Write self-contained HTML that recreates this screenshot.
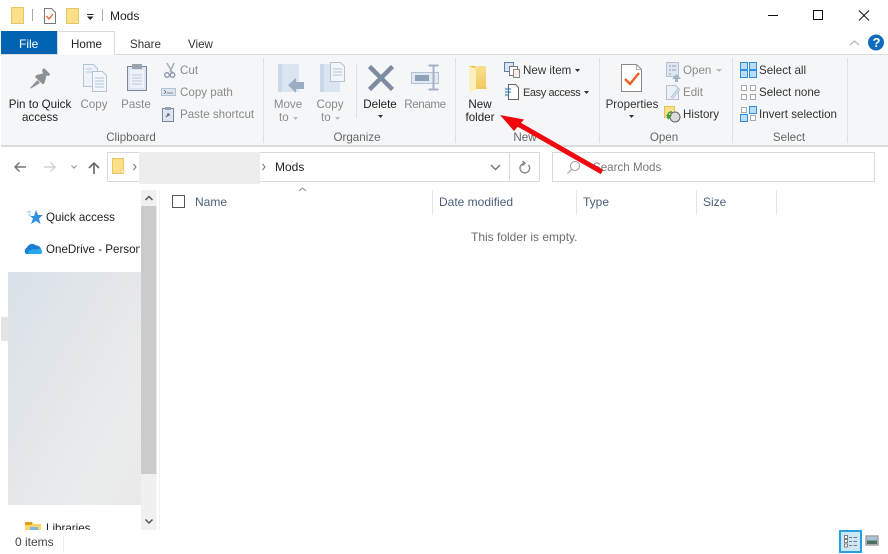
<!DOCTYPE html>
<html><head><meta charset="utf-8"><style>
html,body{margin:0;padding:0;background:#fff}
#r{position:relative;width:888px;height:554px;overflow:hidden;background:#fff;font-family:"Liberation Sans",sans-serif;font-size:11.6px;color:#333}
.t{position:absolute;white-space:nowrap;line-height:14px;margin-top:1px}
.c{text-align:center;transform:translateX(-50%)}
.g{color:#8a8a8a}.d{color:#222}.l{color:#666}
.h{font-size:12px;margin-top:0}
.b{position:absolute}
svg{position:absolute;left:0;top:0}
</style></head><body><div id="r">

<!-- ribbon backgrounds -->
<div class="b" style="left:1px;top:54px;width:887px;height:93px;background:#f5f6f7;border-top:1px solid #dadbdc;border-bottom:2px solid #dadbdc;box-sizing:border-box"></div>
<div class="b" style="left:1px;top:31px;width:56px;height:23px;background:#0063b1"></div>
<div class="b" style="left:57px;top:31px;width:58px;height:24px;background:#fff;border:1px solid #dadbdc;border-bottom:none;box-sizing:border-box;z-index:1"></div>

<svg width="888" height="554" viewBox="0 0 888 554" style="z-index:2">
<defs>
<linearGradient id="gr" x1="0" y1="0" x2="1" y2="1"><stop offset="0" stop-color="#d8e2e8"/><stop offset=".45" stop-color="#e4e7ea"/><stop offset=".8" stop-color="#ebecec"/><stop offset="1" stop-color="#e9e9e9"/></linearGradient>
<linearGradient id="nf" x1="0" y1="0" x2="0" y2="1"><stop offset="0" stop-color="#f8e08e"/><stop offset="1" stop-color="#f3c95a"/></linearGradient>
</defs>
<!-- title bar icons -->
<path d="M11.500 7.500h12v16h-12z" fill="#fcdf86" stroke="#e8c665"/><path d="M20 20h3v3h-3z" fill="#fff2c0" stroke="#e8c665" stroke-width=".6"/>
<path d="M32.500 9v12" stroke="#aaa"/>
<path d="M44.500 8.500h7l4 4v11h-11z" fill="#fff" stroke="#777"/><path d="M46.500 16l2.500 3 4-5" fill="none" stroke="#e8602c" stroke-width="1.300"/>
<path d="M66.500 8.500h12v15h-12z" fill="#fcdf86" stroke="#e8c665"/><path d="M75 20h3v3h-3z" fill="#fff2c0" stroke="#e8c665" stroke-width=".6"/>
<path d="M87 14.500h6.500" stroke="#222"/><path d="M87 16.500h6.500l-3.250 3.500z" fill="#222"/>
<path d="M102.500 9v12" stroke="#aaa"/>
<!-- window buttons -->
<path d="M768 15.500h10" stroke="#111"/><rect x="813.500" y="10.500" width="9" height="9" fill="none" stroke="#111"/>
<path d="M859 10.500l10 10M869 10.500l-10 10" stroke="#111" fill="none"/>
<path d="M850 45l4.500-4 4.500 4" fill="none" stroke="#bbb" stroke-width="1.300"/>
<circle cx="876" cy="42.500" r="8" fill="#0f6cbd"/>

<!-- group separators -->
<path d="M263.500 58v85M455.500 58v85M599.500 58v85M732.500 58v85M847.500 58v85M356.500 64v54" stroke="#dfe0e1"/>

<!-- pin -->
<path d="M42 70L44 68L50 74L49 76L46.500 75.500L44.500 83L43 84.500L35 77L36.500 75L43 73.500z" fill="#8b9297"/>
<path d="M37.500 80L30 88L31 88.500L40 83z" fill="#8b9297"/>
<!-- copy -->
<path d="M83.500 64.500h10l4 4v18h-14z" fill="#eef3f9" stroke="#b4c2d6"/><path d="M92.500 71.500h10l4 4v16h-14z" fill="#f2f5fa" stroke="#b4c2d6"/>
<path d="M95 78h9M95 81h9M95 84h9M95 87h9M86 69h6M86 72h6" stroke="#b6c6dc"/>
<!-- paste -->
<rect x="127.500" y="66.500" width="19" height="24" fill="#dfe6f1" stroke="#7b8798"/><rect x="130" y="70" width="14" height="18" fill="#eef2f8"/><rect x="132" y="64" width="10" height="5" fill="#9aa4b1"/>
<path d="M132 75h10M132 78h10M132 81h10M132 84h10" stroke="#bccadd"/>
<!-- cut -->
<path d="M167 63l5 9 0 2M174 63l-4 9" stroke="#a9b1ba" stroke-width="1.600" fill="none"/><circle cx="167" cy="75" r="2.300" fill="none" stroke="#8595ad" stroke-width="1.300"/><circle cx="172.500" cy="75" r="2.300" fill="none" stroke="#8595ad" stroke-width="1.300"/>
<!-- copy path -->
<rect x="161.500" y="88.500" width="14" height="7" fill="#dce4ef" stroke="#b4c2d6"/><path d="M164 90l2 2-2 2M167 93h6" stroke="#667" stroke-width=".8" fill="none"/>
<!-- paste shortcut -->
<rect x="162.500" y="108.500" width="11" height="13" fill="#dfe6f1" stroke="#7b8798"/><rect x="165" y="107" width="6" height="3" fill="#9aa4b1"/><path d="M166 117l3-3m-2 0h2v2" stroke="#556" fill="none"/>

<!-- move to -->
<path d="M278 64h21v28h-21z" fill="#dbe5f2"/><path d="M278 64h4v28h-4z" fill="#cbd8e8"/>
<path d="M288 85l8-7v4h8v7h-8v4z" fill="#9aadc4"/>
<!-- copy to -->
<path d="M320 64h20v28h-20z" fill="#dbe5f2"/><path d="M320 64h4v28h-4z" fill="#cbd8e8"/>
<path d="M330.500 62.500h10l4 4v15h-14z" fill="#f2f5fa" stroke="#b4c2d6"/><path d="M333 69h9M333 72h9M333 75h9" stroke="#b6c6dc"/>
<!-- delete -->
<path d="M369.500 66.500l23 23M392.500 66.500l-23 23" stroke="#7c8ba1" stroke-width="4.500" fill="none"/>
<!-- rename -->
<rect x="411.500" y="72.500" width="27" height="11" fill="#e3e9f2" stroke="#b4c2d6"/><rect x="415" y="75" width="14" height="6" fill="#8fa1b8"/>
<path d="M428.500 65.500h10M428.500 89.500h10" stroke="#a3b2c6" stroke-width="2"/><path d="M433.500 65.500v24" stroke="#a3b2c6" stroke-width="2"/>
<!-- new folder -->
<path d="M471 66h15v20l1 3h-13z" fill="url(#nf)"/><path d="M469 66l7 3v21l-7 3z" fill="#fdf0c0"/><path d="M469 66h6v1.500h-2z" fill="#e6b93c"/>
<!-- new item -->
<rect x="504.500" y="62.500" width="9" height="9" fill="#d6e6f7" stroke="#5b7fa5"/><rect x="509.500" y="66.500" width="8" height="9" fill="#fff" stroke="#777"/><rect x="513.500" y="69.500" width="6" height="8" fill="#fdeaea" stroke="#888"/>
<!-- easy access -->
<path d="M508.500 84.500h7l3 3v12h-10z" fill="#fff" stroke="#666"/><path d="M505 89h6M505 92h6M505 95h4" stroke="#1f6fb5"/>
<!-- properties -->
<path d="M621.500 64.500h15l5 5v22h-20z" fill="#fff" stroke="#888"/><path d="M636.500 64.500v5h5" fill="none" stroke="#aaa"/><path d="M625 79l5 5 9-11" fill="none" stroke="#ed5e21" stroke-width="2.400"/>
<!-- open -->
<rect x="666.500" y="62.500" width="12" height="14" fill="#dfe6f1" stroke="#b4c2d6"/><path d="M669 66h2M669 70h2M669 74h2M672 66h4M672 70h4" stroke="#8fa1b8"/><path d="M672 79l4.500-5 4.500 5h-3v3h-3v-3z" fill="#9fb2c8"/>
<!-- edit -->
<path d="M666.500 85.500h9l3 3v11h-12z" fill="#edf1f7" stroke="#b4c2d6"/><path d="M671 97l7-9 2 1.500-7 9z" fill="#cfdbe9" stroke="#b4c2d6" stroke-width=".7"/>
<!-- history -->
<rect x="664.500" y="106.500" width="10" height="11" fill="#fbe08a" stroke="#e2c45f"/><circle cx="675" cy="117" r="5" fill="#dcdcdc" stroke="#666"/><path d="M666 115l3 4 3-4z" fill="#3c9a3a"/><path d="M669 119a4 4 0 0 1 3-7" stroke="#3c9a3a" stroke-width="1.500" fill="none"/>
<!-- select all -->
<g fill="#bcdcf6" stroke="#2f8fdc"><rect x="740.500" y="62.500" width="7" height="7"/><rect x="749.500" y="62.500" width="7" height="7"/><rect x="740.500" y="70.500" width="7" height="7"/><rect x="749.500" y="70.500" width="7" height="7"/></g>
<!-- select none -->
<g fill="#fff" stroke="#a8a8a8"><rect x="741.500" y="85.500" width="5" height="5"/><rect x="750.500" y="85.500" width="5" height="5"/><rect x="741.500" y="94.500" width="5" height="5"/><rect x="750.500" y="94.500" width="5" height="5"/></g>
<!-- invert -->
<g><rect x="741.500" y="107.500" width="5" height="5" fill="#fff" stroke="#a8a8a8"/><rect x="749.500" y="106.500" width="7" height="7" fill="#bcdcf6" stroke="#2f8fdc"/><rect x="740.500" y="114.500" width="7" height="7" fill="#bcdcf6" stroke="#2f8fdc"/><rect x="750.500" y="115.500" width="5" height="5" fill="#fff" stroke="#a8a8a8"/></g>
<!-- dropdown carets -->
<path d="M575 69h5l-2.500 3zM584 91h5l-2.500 3zM378 115h5l-2.500 3zM629 115h5l-2.500 3z" fill="#333"/>
<path d="M293 117h5l-2.500 3zM335 117h5l-2.500 3zM716 69h6l-3 3z" fill="#bbb"/>

<!-- nav row -->
<path d="M26 167h-11M19.500 162.500l-4.500 4.500 4.500 4.500" stroke="#777" stroke-width="1.500" fill="none"/>
<path d="M44 167h11M50.500 162.500l4.500 4.500-4.500 4.500" stroke="#d4d4d4" stroke-width="1.500" fill="none"/>
<path d="M71.500 165.500l2.500 2.500 2.500-2.500" stroke="#999" stroke-width="1.200" fill="none"/>
<path d="M94 174v-11M89 168l5-5 5 5" stroke="#666" stroke-width="1.600" fill="none"/>
<rect x="107.500" y="152.500" width="432" height="29" fill="#fff" stroke="#d9d9d9"/><path d="M509.500 153v28" stroke="#d9d9d9"/>
<rect x="552.500" y="152.500" width="322" height="29" fill="#fff" stroke="#d9d9d9"/>
<path d="M112.500 158.500h11v15h-11z" fill="#fcdf86" stroke="#e8c665"/><path d="M121 170h3v3h-3z" fill="#fff2c0" stroke="#e8c665" stroke-width=".6"/>
<path d="M133.500 164l2.500 3-2.500 3M262.500 164l2.500 3-2.500 3" stroke="#777" fill="none"/>
<rect x="139" y="152" width="121" height="32" fill="#ededed"/>
<path d="M491 165l4.500 4.500 4.500-4.500" stroke="#777" stroke-width="1.500" fill="none"/>
<path d="M528.500 165a4.800 4.800 0 1 1-3.500-1.700M522.500 161l2.500 2.300-2.500 2.200" stroke="#888" stroke-width="1.400" fill="none"/>
<circle cx="575" cy="166" r="4.500" fill="none" stroke="#999"/><path d="M571.500 169.500l-4 4" stroke="#999"/>

<!-- nav pane -->
<rect x="8" y="272" width="133" height="233" fill="url(#gr)"/>
<rect x="1" y="317" width="7" height="24" fill="#e4e4e4"/>
<rect x="141" y="190" width="15.500" height="340" fill="#f0f0f0"/><rect x="141" y="206" width="15.500" height="268" fill="#cbcbcb"/>
<path d="M145.500 200l3.500-3.500 3.500 3.500M145.500 519.500l3.500 3.500 3.500-3.500" stroke="#555" stroke-width="1.500" fill="none"/>
<path d="M159.500 190v340" stroke="#f2f2f2"/>
<path d="M36 210l2 5h5l-4 3.500 1.500 5.500-4.500-3-5 3 2-5.500-3-2.500h4z" fill="#2f8fe0"/><path d="M27 212h4M28 215h3" stroke="#7cc0f2"/>
<path d="M26 254a4 4 0 0 1 1-6.500 5.500 5.500 0 0 1 9-2 4.500 4.500 0 0 1 5 4 3 3 0 0 1 0 4.500z" fill="#1a7fd4"/><path d="M28 254a3 3 0 0 1 3-4 5 5 0 0 1 5 0 3 3 0 0 1 5 4z" fill="#28a8ea"/>
<path d="M25 522h7l2 2h7v8h-16z" fill="#fcd669"/><path d="M25 522h7v3h-7z" fill="#dda21a"/><rect x="30" y="527" width="8" height="5" fill="#7ab8e8"/>

<!-- list header -->
<rect x="172.500" y="195.500" width="12" height="12" fill="#fff" stroke="#555"/>
<path d="M299 191l3.500-3 3.500 3" stroke="#888" fill="none"/>
<path d="M432.500 190v25M576.500 190v25M696.500 190v25M776.500 190v25" stroke="#e5e5e5"/>

<!-- status bar -->
<rect x="0" y="530" width="888" height="24" fill="#fff"/>
<path d="M63.500 536v17" stroke="#eee"/>
<rect x="840" y="531" width="21" height="21" fill="#cce8f8" stroke="#2a9fdf" stroke-width="2"/>
<g fill="#fff" stroke="#666" stroke-width=".8"><rect x="844.500" y="535.500" width="3" height="3"/><rect x="844.500" y="539.500" width="3" height="3"/><rect x="844.500" y="544" width="3" height="3"/></g>
<path d="M849 537.500h3M853.500 537.500h3.500M849 541.500h3M853.500 541.500h3.500M849 545.500h3M853.500 545.500h3.500" stroke="#777"/>
<rect x="866" y="536" width="12" height="9" fill="#a9c4d6" stroke="#a3a3a3" stroke-width="1.500"/><path d="M867 540.500h10v3.500h-10z" fill="#4d6e60"/>
</svg>

<!-- text -->
<div class="t h d" style="left:110px;top:9px">Mods</div>
<div class="t h" style="left:19px;top:37px;color:#fff">File</div>
<div class="t d" style="left:71px;top:37px;z-index:3">Home</div>
<div class="t" style="left:130px;top:37px">Share</div>
<div class="t" style="left:188px;top:37px">View</div>
<div class="t" style="left:872.500px;top:34.500px;color:#fff;font-weight:bold;z-index:3;font-size:13px">?</div>

<div class="t c d" style="left:40px;top:97px">Pin to Quick</div>
<div class="t c d" style="left:40px;top:110px">access</div>
<div class="t c g" style="left:94px;top:97px">Copy</div>
<div class="t c g" style="left:136px;top:97px">Paste</div>
<div class="t g" style="left:180px;top:63px">Cut</div>
<div class="t g" style="left:180px;top:85px">Copy path</div>
<div class="t g" style="left:180px;top:107px">Paste shortcut</div>
<div class="t c l" style="left:131px;top:130px">Clipboard</div>

<div class="t c g" style="left:288px;top:97px">Move</div>
<div class="t g" style="left:279px;top:110px">to</div>
<div class="t c g" style="left:330px;top:97px">Copy</div>
<div class="t g" style="left:321px;top:110px">to</div>
<div class="t c d" style="left:380px;top:97px">Delete</div>
<div class="t c g" style="left:425px;top:97px;letter-spacing:-.4px">Rename</div>
<div class="t c l" style="left:357px;top:130px">Organize</div>

<div class="t c d" style="left:480px;top:97px">New</div>
<div class="t c d" style="left:480px;top:110px">folder</div>
<div class="t" style="left:523px;top:63px">New item</div>
<div class="t" style="left:523px;top:85px;font-size:11px;letter-spacing:-.4px">Easy access</div>
<div class="t c l" style="left:525px;top:130px">New</div>

<div class="t c" style="left:632px;top:97px">Properties</div>
<div class="t g" style="left:683px;top:63px">Open</div>
<div class="t g" style="left:683px;top:85px">Edit</div>
<div class="t" style="left:683px;top:107px">History</div>
<div class="t c l" style="left:664px;top:130px">Open</div>

<div class="t" style="left:759px;top:63px">Select all</div>
<div class="t" style="left:759px;top:85px">Select none</div>
<div class="t" style="left:759px;top:107px">Invert selection</div>
<div class="t c l" style="left:789px;top:130px">Select</div>

<div class="t h d" style="left:275px;top:160px;z-index:3">Mods</div>
<div class="t" style="left:593px;top:160px;color:#777;z-index:3">Search Mods</div>

<div class="t d" style="left:46px;top:210px;z-index:3">Quick access</div>
<div class="t d" style="left:46px;top:242px;z-index:3;width:94px;overflow:hidden">OneDrive - Personal</div>
<div class="t d" style="left:46px;top:521px;z-index:1">Libraries</div>

<div class="t h" style="left:195px;top:195px;color:#4c607a;z-index:3">Name</div>
<div class="t h" style="left:439px;top:195px;color:#4c607a;z-index:3">Date modified</div>
<div class="t h" style="left:583px;top:195px;color:#4c607a;z-index:3">Type</div>
<div class="t h" style="left:703px;top:195px;color:#4c607a;z-index:3">Size</div>
<div class="t h" style="left:471px;top:230px;color:#6d6d6d;z-index:3">This folder is empty.</div>
<div class="t h" style="left:15px;top:535px;color:#444;z-index:3">0 items</div>

<!-- red arrow -->
<svg width="888" height="554" viewBox="0 0 888 554" style="z-index:5">
<path d="M602 172L518 124" stroke="#f0060c" stroke-width="5" fill="none"/>
<path d="M500 115L524 119.500L514 131z" fill="#f0060c"/>
</svg>
</div></body></html>
